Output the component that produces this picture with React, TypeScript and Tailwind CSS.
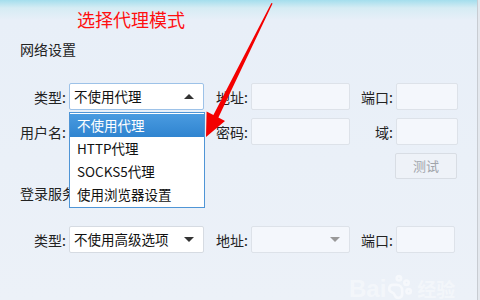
import { PawPrint } from "lucide-react";

const font = "font-['Microsoft_YaHei','Noto_Sans_CJK_SC',sans-serif]";

function Label({ text, w }: { text: string; w: string }) {
  return (
    <span className={`${w} shrink-0 pr-[3px] text-right text-[14px] leading-[26px] text-[#222]`}>
      {text}
    </span>
  );
}

function Field({ w, className = "" }: { w: string; className?: string }) {
  return (
    <div
      className={`${w} h-[27px] shrink-0 rounded-[2px] border border-[#dde2e9] bg-[#f4f7fc] ${className}`}
    />
  );
}

function Select({
  value,
  w,
  up,
  active,
  disabled,
}: {
  value: string;
  w: string;
  up?: boolean;
  active?: boolean;
  disabled?: boolean;
}) {
  return (
    <div
      className={`${w} flex h-[27px] shrink-0 items-center justify-between rounded-[2px] border pl-[4px] pr-[9px] text-[13.5px] text-[#111] ${
        active ? "border-[#9dc2e8] bg-white" : disabled ? "border-[#dde2e9] bg-[#f4f7fc]" : "border-[#d6dbe2] bg-white"
      }`}
    >
      <span>{value}</span>
      <span
        className={`h-0 w-0 border-x-[5px] border-x-transparent ${
          up
            ? "border-b-[5px] border-b-[#333]"
            : disabled
              ? "border-t-[5px] border-t-[#999]"
              : "border-t-[5px] border-t-[#333]"
        }`}
      />
    </div>
  );
}

const options = ["不使用代理", "HTTP代理", "SOCKS5代理", "使用浏览器设置"];

export default function App() {
  return (
    <div
      className={`relative h-[300px] w-[480px] overflow-hidden bg-[linear-gradient(to_bottom,#a4deed_0px,#d6ecf4_8px,#e8eff8_20px,#ecf1f8_100%)] ${font}`}
    >
      <div className="pl-[77px] pt-[6px] text-[18px] leading-[26px] text-[#ff1010]">选择代理模式</div>
      <div className="mt-[7px] pl-[20px] text-[14px] leading-[20px] text-[#222]">网络设置</div>

      <div className="mt-[24px] flex flex-col gap-[8px] pl-[20px]">
        <div className="flex items-center">
          <Label text="类型:" w="w-[49px]" />
          <Select value="不使用代理" w="w-[135px]" up active />
          <Label text="地址:" w="w-[47px]" />
          <Field w="w-[99px]" />
          <Label text="端口:" w="w-[46px]" />
          <Field w="w-[62px]" />
        </div>
        <div className="flex items-center">
          <Label text="用户名:" w="w-[49px]" />
          <Field w="w-[135px]" />
          <Label text="密码:" w="w-[47px]" />
          <Field w="w-[99px]" />
          <Label text="域:" w="w-[46px]" />
          <Field w="w-[62px]" />
        </div>
        <div className="flex items-center pl-[375px]">
          <div className="flex h-[26px] w-[62px] items-center justify-center rounded-[2px] border border-[#d8dde4] bg-[#eef2f8] text-[13px] text-[#a0a4aa]">
            测试
          </div>
        </div>
      </div>

      <div className="mt-[4px] pl-[20px] text-[14px] leading-[20px] text-[#222]">登录服务器设置</div>

      <div className="mt-[23px] flex items-center pl-[20px]">
        <Label text="类型:" w="w-[49px]" />
        <Select value="不使用高级选项" w="w-[135px]" />
        <Label text="地址:" w="w-[47px]" />
        <Select value="" w="w-[99px]" disabled />
        <Label text="端口:" w="w-[46px]" />
        <Field w="w-[59px]" />
      </div>

      {/* open dropdown list */}
      <ul className="absolute left-[69px] top-[112px] h-[96px] w-[136px] border border-[#4f95d6] bg-white pt-[1px] text-[13.5px]">
        {options.map((o, i) => (
          <li
            key={o}
            className={`flex h-[23px] items-center pl-[7px] ${
              i === 0 ? "bg-[linear-gradient(to_bottom,#4a9be0,#2f84d0)] text-white" : "text-[#111]"
            }`}
          >
            {o}
          </li>
        ))}
      </ul>

      {/* red annotation arrow */}
      <svg className="absolute left-0 top-0" width="480" height="300" viewBox="0 0 480 300">
        <polygon
          points="272.6,3.6 218.4,117.6 225,121 206,137 206.6,111.6 213.4,115 271.4,3"
          fill="#f40000"
        />
      </svg>

      {/* watermark */}
      <div className="absolute left-[349px] top-[274px] flex items-end gap-[1px] text-[24px] font-bold leading-[30px] text-white/40">
        <span className="font-['Liberation_Sans',sans-serif]">Bai</span>
        <PawPrint className="mb-[4px] size-[26px] text-white/50" strokeWidth={2.5} />
        <span className="ml-[3px] text-[19px]">经验</span>
      </div>

      <div className="absolute right-0 top-0 h-full w-[3px] border-l border-[#c8ccd2] bg-[#e4e8ee]" />
    </div>
  );
}
